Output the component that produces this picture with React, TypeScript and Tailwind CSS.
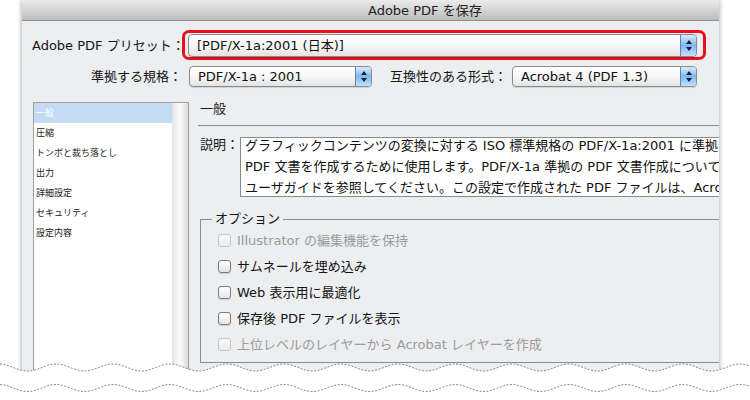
import React from "react";

function Stepper() {
  return (
    <div className="flex w-[16px] shrink-0 flex-col items-center justify-center gap-[3px] rounded-r-[3px] border-l border-[#5b83b3] bg-gradient-to-b from-[#d9ecfd] via-[#7fb8ef] to-[#c4e2fc]">
      <svg width="6" height="4" viewBox="0 0 6 4">
        <path d="M3 0 L6 4 L0 4 Z" fill="#14243a" />
      </svg>
      <svg width="6" height="4" viewBox="0 0 6 4">
        <path d="M0 0 L6 0 L3 4 Z" fill="#14243a" />
      </svg>
    </div>
  );
}

function Popup({ text, className }: { text: string; className: string }) {
  return (
    <div
      className={
        "flex shrink-0 items-stretch rounded-[4px] border border-[#8b8b8b] bg-gradient-to-b from-white via-[#f7f7f7] to-[#e3e3e3] shadow-[0_1px_1px_rgba(0,0,0,0.12)] " +
        className
      }
    >
      <div className="flex flex-1 items-center whitespace-nowrap pl-[8px] text-[13px] leading-none text-[#111]">
        {text}
      </div>
      <Stepper />
    </div>
  );
}

function Check({ label, disabled }: { label: string; disabled?: boolean }) {
  return (
    <div className="flex h-[26px] items-center gap-[6px]">
      <div
        className={
          disabled
            ? "h-[13px] w-[13px] rounded-[3px] border border-[#c9c9c9] bg-gradient-to-b from-[#fafafa] to-[#ececec]"
            : "h-[13px] w-[13px] rounded-[3px] border border-[#7d7d7d] bg-gradient-to-b from-white to-[#e4e4e4] shadow-[0_1px_1px_rgba(0,0,0,0.15)]"
        }
      />
      <span
        className={
          disabled
            ? "whitespace-nowrap text-[13px] leading-none text-[#9b9b9b]"
            : "whitespace-nowrap text-[13px] leading-none text-[#141414]"
        }
      >
        {label}
      </span>
    </div>
  );
}

function wavePath(offset: number) {
  const pts: string[] = [];
  for (let x = 0; x <= 750; x += 2) {
    const y = offset - 3.5 * Math.cos((2 * Math.PI * (x + 1)) / 57);
    pts.push(`${x === 0 ? "M" : "L"}${x} ${y.toFixed(2)}`);
  }
  return pts.join(" ");
}

const listItems = [
  "一般",
  "圧縮",
  "トンボと裁ち落とし",
  "出力",
  "詳細設定",
  "セキュリティ",
  "設定内容",
];

export default function App() {
  const w1 = wavePath(12.5);
  const w2 = wavePath(33);
  return (
    <div className="relative h-[400px] w-[750px] overflow-hidden bg-white font-['DejaVu_Sans','Noto_Sans_CJK_JP',sans-serif] text-[#151515]">
      <div className="ml-[22px] h-[385px] w-[697px] overflow-hidden bg-[#eceef0] shadow-[0_0_5px_rgba(0,0,0,0.4)]">
        {/* title bar */}
        <div className="flex h-[21px] items-center whitespace-nowrap border-b border-[#8e8e8e] bg-gradient-to-b from-[#ececec] to-[#bcbcbc] pl-[346px] text-[13px] leading-none text-[#222]">
          Adobe PDF を保存
        </div>

        {/* row 1 */}
        <div className="mt-[9px] flex h-[30px] items-center">
          <div className="w-[160px] shrink-0 whitespace-nowrap pl-[10px] text-[13px] leading-none">
            Adobe PDF プリセット：
          </div>
          <div className="flex h-[30px] w-[524px] shrink-0 items-center rounded-[7px] border-[3px] border-[#ea0f1c] pl-[3px] pr-[6px]">
            <Popup text="[PDF/X-1a:2001 (日本)]" className="h-[23px] flex-1" />
          </div>
        </div>

        {/* row 2 */}
        <div className="mt-[6px] flex h-[21px] items-center">
          <div className="w-[160px] shrink-0 whitespace-nowrap text-right text-[13px] leading-none">
            準拠する規格：
          </div>
          <Popup text="PDF/X-1a : 2001" className="ml-[7px] h-[21px] w-[183px]" />
          <div className="ml-[18px] w-[117px] shrink-0 whitespace-nowrap text-[13px] leading-none">
            互換性のある形式：
          </div>
          <Popup text="Acrobat 4 (PDF 1.3)" className="ml-[5px] h-[21px] w-[185px]" />
        </div>

        {/* main */}
        <div className="mt-[15px] flex">
          <div className="ml-[11px] flex h-[300px] w-[156px] shrink-0 border-l border-r border-t border-[#9f9f9f]">
            <div className="w-[138px] shrink-0 bg-white">
              {listItems.map((it, i) => (
                <div
                  key={it}
                  className={
                    i === 0
                      ? "flex h-[20px] items-center whitespace-nowrap bg-[#c3dcf3] pl-[2px] text-[9px] leading-none text-white"
                      : "flex h-[20px] items-center whitespace-nowrap pl-[2px] text-[9px] leading-none text-[#222]"
                  }
                >
                  {it}
                </div>
              ))}
            </div>
            <div className="flex-1 bg-gradient-to-r from-[#e4e4e4] via-[#fbfbfb] to-[#dcdcdc]" />
          </div>

          <div className="ml-[9px] flex w-[600px] shrink-0 flex-col">
            <div className="h-[24px] border-b border-[#8e8e8e] pl-[2px] text-[13px] leading-[13px]">
              一般
            </div>
            <div className="mt-[11px] flex">
              <div className="w-[42px] shrink-0 whitespace-nowrap pl-[2px] pt-[1px] text-[13px] leading-[13px]">
                説明：
              </div>
              <div className="h-[60px] w-[540px] shrink-0 overflow-hidden border border-[#8a8a8a] bg-white pl-[4px]">
                <div className="-mt-[3px] whitespace-nowrap text-[13px] leading-[21px] text-[#111]">
                  <div>グラフィックコンテンツの変換に対する ISO 標準規格の PDF/X-1a:2001 に準拠</div>
                  <div>PDF 文書を作成するために使用します。PDF/X-1a 準拠の PDF 文書作成について</div>
                  <div>ユーザガイドを参照してください。この設定で作成された PDF ファイルは、Acro</div>
                </div>
              </div>
            </div>

            <fieldset className="ml-[2px] mt-[14px] w-[560px] border border-[#8c8c8c] pb-[5px]">
              <legend className="ml-[11px] px-[3px] text-[13px] leading-[16px] text-[#111]">
                オプション
              </legend>
              <div className="pl-[17px]">
                <Check label="Illustrator の編集機能を保持" disabled />
                <Check label="サムネールを埋め込み" />
                <Check label="Web 表示用に最適化" />
                <Check label="保存後 PDF ファイルを表示" />
                <Check label="上位レベルのレイヤーから Acrobat レイヤーを作成" disabled />
              </div>
            </fieldset>
          </div>
        </div>
      </div>

      {/* torn wavy edge */}
      <svg
        className="pointer-events-none absolute left-0 top-[355px]"
        width="750"
        height="45"
        viewBox="0 0 750 45"
      >
        <path d={`${w1} L750 45 L0 45 Z`} fill="#ffffff" />
        <path d={w1} fill="none" stroke="#8a8a8a" strokeWidth="1" strokeDasharray="2 1.5" />
        <path d={w2} fill="none" stroke="#8a8a8a" strokeWidth="1" strokeDasharray="2 1.5" />
      </svg>
    </div>
  );
}
